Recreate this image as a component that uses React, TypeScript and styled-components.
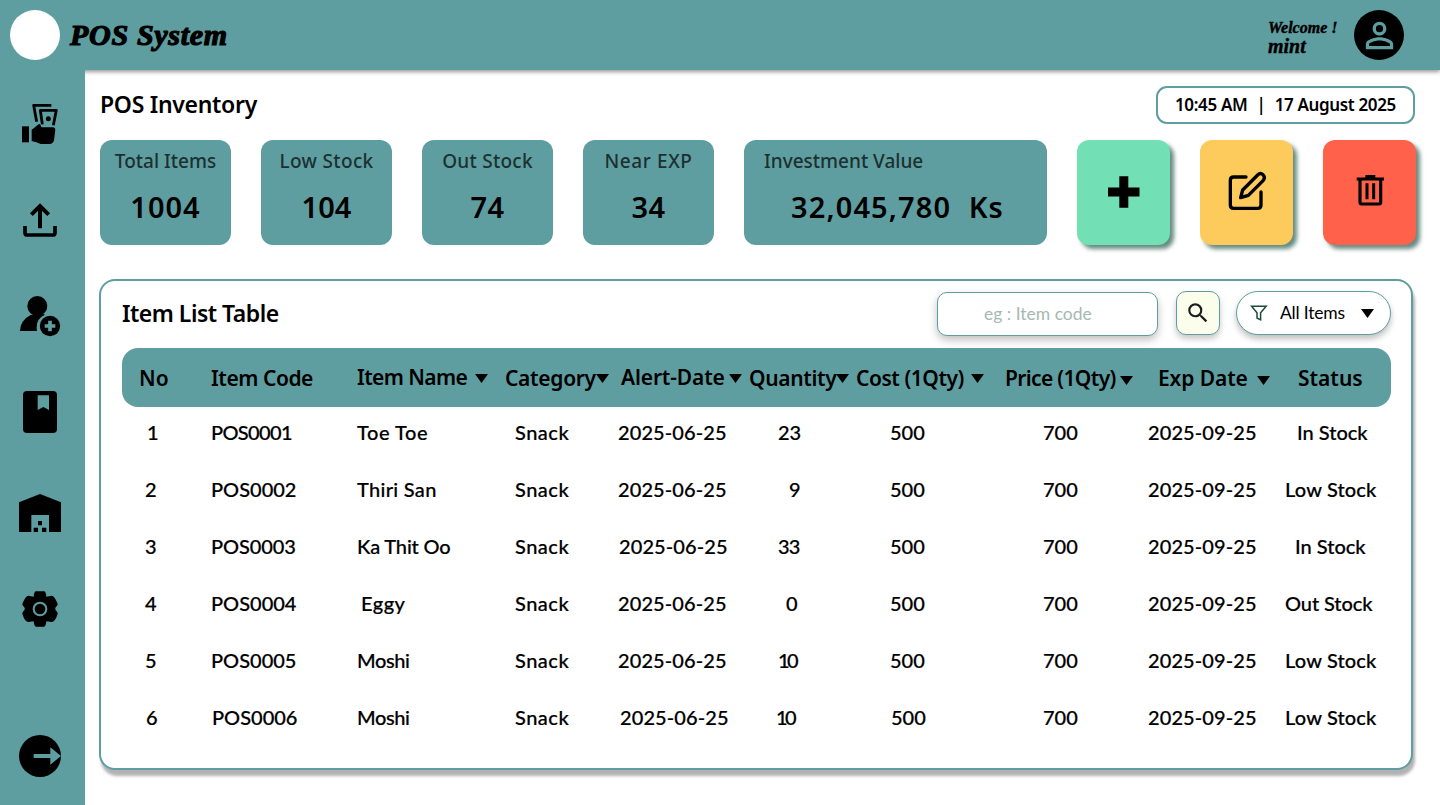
import React from "react";
import styled, { createGlobalStyle } from "styled-components";
import { MdPersonOutline, MdSearch } from "react-icons/md";

const teal = "#5f9ea0";
const display = `"Noto Sans", "Open Sans", sans-serif`;
const body = `Lato, "Open Sans", sans-serif`;
const script = `"Liberation Serif", "Times New Roman", serif`;

const GlobalStyle = createGlobalStyle`
  * { box-sizing: border-box; }
  body { margin: 0; background: #fff; color: #000; font-family: ${body}; }
  button { font: inherit; color: inherit; padding: 0; border: 0; }
`;

const Page = styled.div`
  width: 1440px;
  height: 805px;
  display: flex;
  flex-direction: column;
  overflow: hidden;
`;

const TopBar = styled.header`
  flex: none;
  height: 70px;
  padding: 0 36px 0 10px;
  display: flex;
  align-items: center;
  background: ${teal};
  box-shadow: 0 2px 4px rgba(0, 0, 0, 0.4);
`;

const Logo = styled.div`
  width: 50px;
  height: 50px;
  border-radius: 50%;
  background: #fff;
`;

const Brand = styled.h1`
  margin: 0 auto 0 10px;
  font: italic 700 30px/40px ${script};
  letter-spacing: 0.7px;
  -webkit-text-stroke: 1.2px #000;
`;

const Welcome = styled.div`
  width: 86px;
  padding-top: 4px;
  font: italic 700 16px/18px ${script};
  white-space: nowrap;
  -webkit-text-stroke: 0.4px #000;
`;

const UserName = styled.div`
  font-size: 20px;
  line-height: 19px;
`;

const Avatar = styled.div`
  width: 50px;
  height: 50px;
  display: grid;
  place-items: center;
  border-radius: 50%;
  background: #000;
  color: ${teal};
`;

const Body = styled.div`
  flex: 1;
  display: flex;
  min-height: 0;
`;

const Sidebar = styled.nav`
  position: relative;
  flex: none;
  width: 85px;
  padding: 6px 5px 0 0;
  display: flex;
  flex-direction: column;
  align-items: center;
  background: ${teal};
`;

const NavItem = styled.a<{ $gap?: number }>`
  width: 44px;
  height: 96px;
  margin-top: ${(p) => p.$gap ?? 0}px;
  display: grid;
  place-items: center;
`;

const Main = styled.main`
  flex: 1;
  padding: 16px 0 0 15px;
`;

const TitleRow = styled.div`
  height: 38px;
  width: 1315px;
  display: flex;
  align-items: center;
  justify-content: space-between;
`;

const Heading = styled.h2<{ $spacing?: number; $lift?: number }>`
  margin: 0;
  padding-bottom: ${(p) => p.$lift ?? 0}px;
  font: 600 23px/30px ${display};
  letter-spacing: ${(p) => p.$spacing ?? 0}px;
`;

const Clock = styled.div`
  width: 259px;
  height: 38px;
  padding: 0 17px;
  display: flex;
  align-items: center;
  justify-content: space-between;
  border: 2px solid ${teal};
  border-radius: 11px;
  font: 600 17px/24px ${display};
  letter-spacing: -0.35px;
`;

const Cards = styled.div`
  margin-top: 16px;
  display: flex;
  gap: 30px;
`;

const Card = styled.section<{ $wide?: boolean }>`
  width: ${(p) => (p.$wide ? 303 : 131)}px;
  height: 105px;
  padding-top: 7px;
  border-radius: 12px;
  background: ${teal};
  text-align: center;
  white-space: nowrap;
`;

const CardLabel = styled.div<{ $wide?: boolean; $spacing?: number }>`
  padding-left: ${(p) => (p.$wide ? 20 : 0)}px;
  text-align: ${(p) => (p.$wide ? "left" : "center")};
  font: 500 19px/28px ${display};
  letter-spacing: ${(p) => p.$spacing ?? 0}px;
  color: #1c3031;
`;

const CardValue = styled.div<{ $wide?: boolean; $spacing?: number }>`
  margin-top: 13px;
  padding-left: ${(p) => (p.$wide ? 4 : 0)}px;
  font: 600 29px/38px ${display};
  letter-spacing: ${(p) => p.$spacing ?? 0}px;
  white-space: pre;
`;

const ActionButton = styled.button<{ $color: string }>`
  width: 93px;
  height: 105px;
  display: grid;
  place-items: center;
  border-radius: 12px;
  background: ${(p) => p.$color};
  box-shadow: 4px 4px 4px rgba(0, 60, 45, 0.6);
`;

const Panel = styled.section`
  width: 1314px;
  height: 491px;
  margin: 34px 0 0 -1px;
  padding: 10px 20px 0 21px;
  border: 2px solid ${teal};
  border-radius: 16px;
  background: #fff;
  box-shadow: 2px 6px 3px rgba(0, 0, 0, 0.3);
`;

const Toolbar = styled.div`
  height: 44px;
  display: flex;
  align-items: center;
`;

const SearchBox = styled.div`
  width: 221px;
  height: 44px;
  margin: 2px 18px 0 auto;
  padding-left: 46px;
  border: 1px solid ${teal};
  border-radius: 10px;
  background: #fff;
  box-shadow: 0 4px 8px rgba(0, 0, 0, 0.25);
  color: #a5b9b2;
  font: 400 17.5px/41px ${body};
`;

const SearchButton = styled.button`
  width: 44px;
  height: 44px;
  display: grid;
  place-items: center;
  border: 1px solid ${teal};
  border-radius: 10px;
  background: #fafeea;
  color: #1d1b20;
  box-shadow: 0 4px 6px rgba(0, 0, 0, 0.22);
`;

const Filter = styled.button`
  width: 155px;
  height: 44px;
  margin-left: 16px;
  padding: 0 16px 0 13px;
  display: flex;
  align-items: center;
  border: 1px solid ${teal};
  border-radius: 22px;
  background: #fff;
  box-shadow: 0 4px 6px rgba(0, 0, 0, 0.25);
  font: 400 17.5px/42px ${body};
  letter-spacing: -0.2px;
`;

const FilterText = styled.span`
  margin: 0 auto 0 12px;
`;

const grid = `
  display: grid;
  grid-template-columns: 89px 146px 148px 113px 131px 107px 149px 143px 137px 106px;
`;

const HeadRow = styled.div`
  ${grid}
  height: 59px;
  margin-top: 13px;
  align-items: center;
  border-radius: 16px;
  background: ${teal};
`;

const HeadCell = styled.div<{ $inset: number; $lift?: number }>`
  padding-left: ${(p) => p.$inset}px;
  padding-bottom: ${(p) => p.$lift ?? 0}px;
  display: flex;
  align-items: center;
  font: 600 21px/30px ${display};
  white-space: nowrap;
`;

const HeadLabel = styled.span<{ $width?: number; $spacing?: number }>`
  flex: none;
  width: ${(p) => (p.$width ? `${p.$width}px` : "auto")};
  letter-spacing: ${(p) => p.$spacing ?? 0}px;
`;

const CaretShape = styled.svg<{ $drop?: number }>`
  flex: none;
  margin-top: ${(p) => p.$drop ?? 0}px;
`;

const Row = styled.div`
  ${grid}
  height: 57px;
  font: 500 20px/50px ${body};
  white-space: nowrap;
  -webkit-text-stroke: 0.2px #000;
`;

const Cell = styled.div<{ $inset: number; $spacing?: number }>`
  padding-left: ${(p) => p.$inset}px;
  letter-spacing: ${(p) => p.$spacing ?? 0}px;
`;

const Caret = ({ drop }: { drop?: number }) => (
  <CaretShape $drop={drop} width="13" height="9" viewBox="0 0 13 9">
    <path d="M0 0H13L6.5 9Z" />
  </CaretShape>
);

const Glyph = ({ view, children }: { view: string; children: React.ReactNode }) => (
  <svg width="44" height="44" viewBox={view}>{children}</svg>
);

const CashIcon = () => (
  <Glyph view="54 306 132 132">
    <rect x="66" y="379" width="21" height="48" />
    <path d="M95 389L103 383L110 377L117 372Q121 371 122 376L124 382H160Q166 383 166 390L162 421Q160 431 150 432H122L109 427L95 423Z" />
    <path d="M154 316H101L110 365M127 373L121 331H169L160 376" fill="none" stroke="#000" strokeWidth="8.5" strokeLinejoin="round" />
    <circle cx="145" cy="356" r="7.5" />
  </Glyph>
);

const UploadIcon = () => (
  <Glyph view="54 594 132 132">
    <path d="M120 685V618M94 644L120 618L146 644" fill="none" stroke="#000" strokeWidth="12" />
    <path d="M75 678V698Q75 705 82 705H158Q165 705 165 698V678" fill="none" stroke="#000" strokeWidth="11" />
  </Glyph>
);

const AddUserIcon = () => (
  <Glyph view="54 72 132 132">
    <circle cx="112" cy="108" r="30" />
    <path d="M60 183Q61 150 93 134L130 132L135 134Q109 146 110 172L111 183Z" />
    <circle cx="150" cy="168" r="30.5" />
    <path d="M150 152V184M134 168H166" stroke={teal} strokeWidth="11" />
  </Glyph>
);

const BookIcon = () => (
  <Glyph view="54 360 132 132">
    <rect x="69" y="363" width="102" height="126" rx="12" />
    <path d="M113 376H147V420L130 411L113 420Z" fill={teal} />
  </Glyph>
);

const WarehouseIcon = () => (
  <Glyph view="54 63 132 132">
    <path d="M57 97L120 72L183 97V186H147V135H94V186H57Z" />
    <path d="M114 153H126V166H114ZM101 173H114V186H101ZM126 173H139V186H126Z" />
  </Glyph>
);

const GearIcon = () => (
  <Glyph view="54 351 132 132">
    <path
      d="M107 364H133Q138 366 139 380L155 377Q163 377 173 401Q174 406 167 412Q164 417 167 421Q174 426 173 432Q165 456 155 456L139 454Q138 467 133 470H107Q102 467 101 454L85 456Q75 456 67 432Q66 426 73 421Q76 417 73 412Q66 406 67 401Q77 377 85 377L101 380Q102 366 107 364Z"
    />
    <circle cx="120" cy="417" r="19" fill="none" stroke={teal} strokeWidth="6" />
  </Glyph>
);

const LogoutIcon = () => (
  <Glyph view="54 792 132 132">
    <circle cx="120" cy="858" r="63" />
    <path d="M101 852H151V832L183 858L151 884V864H101Z" fill={teal} />
  </Glyph>
);

const PlusIcon = () => (
  <svg width="48" height="48" viewBox="0 0 48 48">
    <path d="M19.3 7.3H28.3V18.5H39.5V27.5H28.3V38.7H19.3V27.5H8V18.5H19.3Z" />
  </svg>
);

const EditIcon = () => (
  <svg width="48" height="48" viewBox="488 115 144 144" fill="none" stroke="#000" strokeWidth="10" strokeLinecap="round" strokeLinejoin="round">
    <path d="M557 139H520Q510 139 510 149V223Q510 233 520 233H592Q602 233 602 223V184" />
    <path d="M541 201L547 178L592 133Q600 125 608 132Q616 140 609 149L564 194Z" />
  </svg>
);

const TrashIcon = () => (
  <svg width="48" height="48" viewBox="857 115 144 144" fill="none" stroke="#000" strokeWidth="9.5">
    <path d="M889 145H971M915 138H945" />
    <path d="M899 147V215Q899 220 904 220H956Q961 220 961 215V147" />
    <path d="M920 158V206M940 158V206" strokeWidth="9" />
  </svg>
);

const FunnelIcon = () => (
  <svg width="18" height="16" viewBox="0 0 18 16" fill="none" stroke="#1b4a3c" strokeWidth="1.5">
    <path d="M1.6 1.2H16.2L10.6 7.8V14.8L7 13V7.8Z" />
  </svg>
);

const navigation = [
  { name: "Sales", icon: <CashIcon /> },
  { name: "Upload", icon: <UploadIcon /> },
  { name: "Add user", icon: <AddUserIcon /> },
  { name: "Records", icon: <BookIcon /> },
  { name: "Warehouse", icon: <WarehouseIcon />, gap: 5 },
  { name: "Settings", icon: <GearIcon /> },
  { name: "Log out", icon: <LogoutIcon />, gap: 51 },
];

const stats = [
  { label: "Total Items", value: "1004", valueSpacing: 1 },
  { label: "Low Stock", value: "104", labelSpacing: 0.35 },
  { label: "Out Stock", value: "74", labelSpacing: 0.25, valueSpacing: 0.5 },
  { label: "Near EXP", value: "34", labelSpacing: 0.6, valueSpacing: 0.5 },
  { label: "Investment Value", value: "32,045,780  Ks", valueSpacing: 1.15, wide: true },
];

const actions = [
  { name: "Add item", color: "#72dfb5", icon: <PlusIcon /> },
  { name: "Edit item", color: "#fdca5c", icon: <EditIcon /> },
  { name: "Delete item", color: "#ff614a", icon: <TrashIcon /> },
];

type Column = { label: string; inset: number; width?: number; spacing?: number; lift?: number; drop?: number };

const columns: Column[] = [
  { label: "No", inset: 17 },
  { label: "Item Code", inset: 0, spacing: -0.45 },
  { label: "Item Name", inset: 0, width: 118, spacing: -0.6, lift: 1, drop: 3 },
  { label: "Category", inset: 0, width: 91, spacing: -0.3, drop: 2 },
  { label: "Alert-Date", inset: 3, width: 108, spacing: -0.15, lift: 1, drop: 3 },
  { label: "Quantity", inset: 0, width: 87, spacing: -0.35, drop: 2 },
  { label: "Cost (1Qty)", inset: 0, width: 115, spacing: -0.45, drop: 2 },
  { label: "Price (1Qty)", inset: 0, width: 115, spacing: -0.65, drop: 5 },
  { label: "Exp Date", inset: 10, width: 99, spacing: -0.1, drop: 5 },
  { label: "Status", inset: 13 },
];

/* Each cell holds its text, its left inset and, where needed, its tracking. */
type CellData = [text: string, inset: number, spacing?: number];

const rows: CellData[][] = [
  [["1", 25], ["POS0001", 0, -0.65], ["Toe Toe", 0, 0.55], ["Snack", 10, 0.5], ["2025-06-25", 0, 0.1], ["23", 29], ["500", 34], ["700", 38], ["2025-09-25", 0, 0.1], ["In Stock", 12]],
  [["2", 23], ["POS0002", 0], ["Thiri San", 0, 0.3], ["Snack", 10, 0.5], ["2025-06-25", 0, 0.1], ["9", 40], ["500", 34], ["700", 38], ["2025-09-25", 0, 0.1], ["Low Stock", 0, 0.15]],
  [["3", 23], ["POS0003", 0, -0.1], ["Ka Thit Oo", 0, -0.15], ["Snack", 10, 0.5], ["2025-06-25", 1, 0.1], ["33", 29, -0.8], ["500", 34], ["700", 38], ["2025-09-25", 0, 0.1], ["In Stock", 10]],
  [["4", 23], ["POS0004", 0], ["Eggy", 4, 0.5], ["Snack", 10, 0.5], ["2025-06-25", 0, 0.1], ["0", 37], ["500", 34], ["700", 38], ["2025-09-25", 0, 0.1], ["Out Stock", 0, -0.1]],
  [["5", 23], ["POS0005", 0], ["Moshi", 0, -0.4], ["Snack", 10, 0.5], ["2025-06-25", 0, 0.1], ["10", 29, -2.5], ["500", 34], ["700", 38], ["2025-09-25", 0, 0.1], ["Low Stock", 0, 0.15]],
  [["6", 24], ["POS0006", 1], ["Moshi", 0, -0.4], ["Snack", 10, 0.5], ["2025-06-25", 2, 0.1], ["10", 27, -2.5], ["500", 35], ["700", 38], ["2025-09-25", 0, 0.1], ["Low Stock", 0, 0.15]],
];

export default function App() {
  return (
    <Page>
      <GlobalStyle />
      <TopBar>
        <Logo />
        <Brand>POS System</Brand>
        <Welcome>
          Welcome !
          <UserName>mint</UserName>
        </Welcome>
        <Avatar><MdPersonOutline size={41} /></Avatar>
      </TopBar>
      <Body>
        <Sidebar>
          {navigation.map((n) => (
            <NavItem key={n.name} aria-label={n.name} $gap={n.gap}>{n.icon}</NavItem>
          ))}
        </Sidebar>
        <Main>
          <TitleRow>
            <Heading $spacing={-0.3} $lift={2}>POS Inventory</Heading>
            <Clock><span>10:45 AM</span><span>|</span><span>17 August 2025</span></Clock>
          </TitleRow>
          <Cards>
            {stats.map((s) => (
              <Card key={s.label} $wide={s.wide}>
                <CardLabel $wide={s.wide} $spacing={s.labelSpacing}>{s.label}</CardLabel>
                <CardValue $wide={s.wide} $spacing={s.valueSpacing}>{s.value}</CardValue>
              </Card>
            ))}
            {actions.map((a) => (
              <ActionButton key={a.name} aria-label={a.name} $color={a.color}>{a.icon}</ActionButton>
            ))}
          </Cards>
          <Panel>
            <Toolbar>
              <Heading $spacing={-0.5}>Item List Table</Heading>
              <SearchBox>eg : Item code</SearchBox>
              <SearchButton aria-label="Search"><MdSearch size={26} /></SearchButton>
              <Filter><FunnelIcon /><FilterText>All Items</FilterText><Caret /></Filter>
            </Toolbar>
            <HeadRow>
              {columns.map((c) => (
                <HeadCell key={c.label} $inset={c.inset} $lift={c.lift}>
                  <HeadLabel $width={c.width} $spacing={c.spacing}>{c.label}</HeadLabel>
                  {c.width && <Caret drop={c.drop} />}
                </HeadCell>
              ))}
            </HeadRow>
            {rows.map((r) => (
              <Row key={r[1][0]}>
                {r.map(([text, inset, spacing], i) => (
                  <Cell key={i} $inset={inset} $spacing={spacing}>{text}</Cell>
                ))}
              </Row>
            ))}
          </Panel>
        </Main>
      </Body>
    </Page>
  );
}
